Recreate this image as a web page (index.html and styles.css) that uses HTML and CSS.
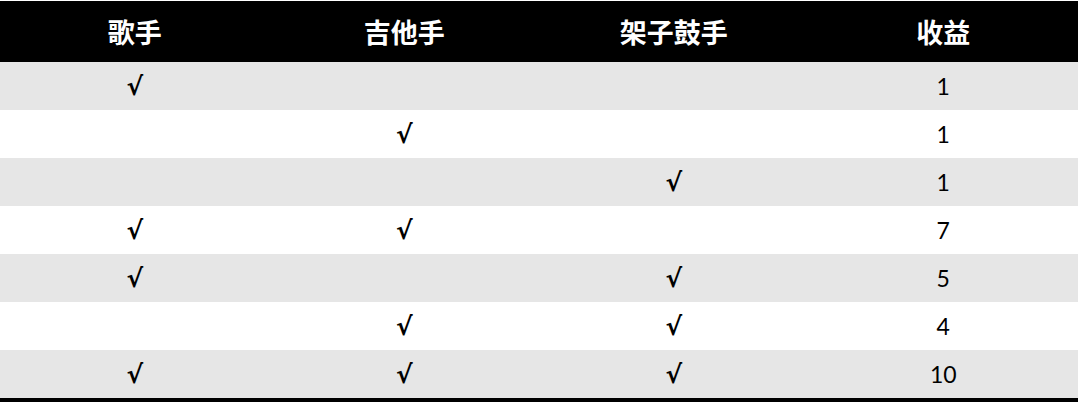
FILE: index.html
```html
<!DOCTYPE html>
<html lang="zh">
<head>
<meta charset="utf-8">
<link rel="stylesheet" href="styles.css">
</head>
<body>
<table class="grid">
  <thead>
    <tr><th>歌手</th><th>吉他手</th><th>架子鼓手</th><th>收益</th></tr>
  </thead>
  <tbody>
    <tr><td class="ck">√</td><td></td><td></td><td>1</td></tr>
    <tr><td></td><td class="ck">√</td><td></td><td>1</td></tr>
    <tr><td></td><td></td><td class="ck">√</td><td>1</td></tr>
    <tr><td class="ck">√</td><td class="ck">√</td><td></td><td>7</td></tr>
    <tr><td class="ck">√</td><td></td><td class="ck">√</td><td>5</td></tr>
    <tr><td></td><td class="ck">√</td><td class="ck">√</td><td>4</td></tr>
    <tr><td class="ck">√</td><td class="ck">√</td><td class="ck">√</td><td>10</td></tr>
  </tbody>
</table>
</body>
</html>
```
FILE: styles.css
```css
html, body {
  margin: 0;
  padding: 0;
  background: #ffffff;
}
.grid {
  margin-top: 1px;
  width: 1078px;
  border-collapse: collapse;
  table-layout: fixed;
  border-bottom: 4px solid #000;
}
.grid th {
  background: #000;
  color: #fff;
  height: 61px;
  padding: 0;
  font-family: "Noto Sans CJK SC", "Noto Sans", sans-serif;
  font-weight: 700;
  font-size: 27px;
  text-align: center;
  vertical-align: middle;
}
.grid td {
  height: 48px;
  padding: 0;
  text-align: center;
  vertical-align: middle;
  font-family: Lato, "Liberation Sans", sans-serif;
  font-size: 23px;
  color: #000;
}
.grid td.ck {
  font-family: "DejaVu Sans", sans-serif;
  font-weight: 700;
  font-size: 25px;
}
.grid tbody tr:nth-child(odd) td {
  background: #e6e6e6;
}
```
